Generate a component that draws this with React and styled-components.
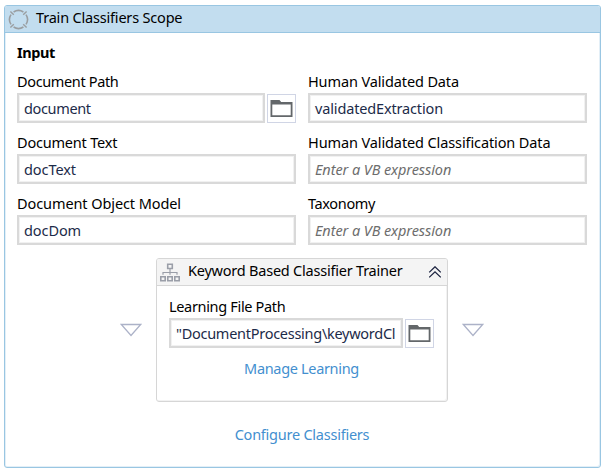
import React from "react";
import styled, { createGlobalStyle } from "styled-components";

const GlobalStyle = createGlobalStyle`
  * { box-sizing: border-box; }
  body {
    margin: 0;
    background: #fff;
    font-family: "Noto Sans", "Open Sans", sans-serif;
    font-size: 14.5px;
    line-height: 20px;
    color: #000;
  }
`;

const Page = styled.main`
  width: 606px;
  height: 474px;
  padding: 5px 5px 6px 4px;
  overflow: hidden;
`;

const Scope = styled.section`
  width: 597px;
  height: 463px;
  border: 1px solid #99c6e2;
  border-radius: 3px;
  box-shadow: inset -1px -1px 0 #e3eff7, inset 1px 0 0 #e3eff7;
  overflow: hidden;
`;

const ScopeHeader = styled.header`
  display: flex;
  align-items: center;
  height: 27px;
  padding: 0 0 0 3px;
  gap: 7px;
  background: #c2ddef;
  border-bottom: 1px solid #99c6e2;
`;

const ScopeBody = styled.div`
  display: flex;
  flex-direction: column;
  padding: 9px 13px 0 12px;
`;

const Text = styled.span`
  display: block;
  white-space: pre;
  letter-spacing: ${(p) => p.$track || 0}px;
`;

const HeaderText = styled(Text)`
  padding-bottom: 4px;
`;

const SectionTitle = styled.h2`
  margin: 0;
  height: 30px;
  font-size: 14.5px;
  font-weight: 700;
  line-height: 20px;
  letter-spacing: -0.4px;
`;

const Columns = styled.div`
  display: grid;
  grid-template-columns: 279px 279px;
  column-gap: 12px;
  row-gap: 10px;
`;

const FieldBlock = styled.div`
  display: flex;
  flex-direction: column;
  height: 51px;
`;

const FieldLabel = styled.label`
  height: 21px;
  line-height: 19px;
`;

const FieldRow = styled.div`
  display: flex;
  align-items: flex-end;
  gap: 2px;
`;

const Input = styled.div`
  flex: 1;
  min-width: 0;
  height: 30px;
  padding: 3px 5px 0;
  border: 2px solid #d9d9d9;
  box-shadow: inset 0 0 0 1px #f1f1f1;
  background: #fff;
  overflow: hidden;
  color: ${(p) => (p.$placeholder ? "#6d6d6d" : "#1c2b49")};
  font-style: ${(p) => (p.$placeholder ? "italic" : "normal")};
`;

const BrowseButton = styled.button`
  display: flex;
  align-items: center;
  justify-content: center;
  width: 29px;
  height: 29px;
  padding: 0;
  border: 1px solid #d0d5e5;
  background: #fff;
`;

const Workflow = styled.div`
  display: flex;
  align-items: center;
  justify-content: center;
  gap: 14px;
  height: 144px;
  margin-top: 13px;
`;

const Card = styled.section`
  width: 292px;
  height: 144px;
  border: 1px solid #d6d6d6;
  border-radius: 3px;
  box-shadow: inset -1px -1px 0 #f2f2f2;
  overflow: hidden;
`;

const CardHeader = styled.header`
  display: flex;
  align-items: center;
  height: 27px;
  padding: 0 5px 0 3px;
  gap: 8px;
  background: #f4f4f4;
  border-bottom: 1px solid #d6d6d6;
`;

const CardTitle = styled.div`
  flex: 1;
`;

const CardBody = styled.div`
  padding: 11px 13px 0 12px;
`;

const Link = styled.a`
  display: flex;
  justify-content: center;
  margin-top: ${(p) => p.$gap}px;
  color: #438fcf;
`;

const Icon = styled.svg`
  display: block;
  flex: none;
`;

const FolderIcon = () => (
  <Icon width="23" height="19" viewBox="0 0 23 19">
    <path d="M0.5 1H9.5L11.2 3H22.5V18H0.5Z" fill="#63676a" />
    <path d="M2.3 5.6H20.7V16.2H2.3Z" fill="#fff" />
  </Icon>
);

const ScopeIcon = () => (
  <Icon width="21" height="21" viewBox="0 0 21 21" fill="none" stroke="#9a9ea1" strokeWidth="1.6">
    <path d="M5.6 3A9 9 0 0 1 15.4 3M18 5.6A9 9 0 0 1 18 15.4M15.4 18A9 9 0 0 1 5.6 18M3 15.4A9 9 0 0 1 3 5.6" />
    <path d="M2.4 2.4L5.8 5.8M18.6 2.4L15.2 5.8M2.4 18.6L5.8 15.2M18.6 18.6L15.2 15.2" strokeWidth="1.4" />
  </Icon>
);

const TreeIcon = () => (
  <Icon width="20" height="19" viewBox="0 0 20 19" fill="none" stroke="#9a9ea8" strokeWidth="1.6">
    <path d="M7.7 1.2h4.6v4.3H7.7zM0.8 13.7h4.4v4H0.8zM7.8 13.7h4.4v4H7.8zM14.8 13.7h4.4v4h-4.4z" />
    <path d="M10 6V11.8M3 11.8V9.5H17V11.8" strokeWidth="1.2" />
  </Icon>
);

const CollapseIcon = () => (
  <Icon width="14" height="12" viewBox="0 0 14 12" fill="none" stroke="#1c2340" strokeWidth="1.3">
    <path d="M1.2 6.4L7 0.8L12.8 6.4M1.2 11.4L7 5.8L12.8 11.4" />
  </Icon>
);

const DropArrow = () => (
  <Icon width="22" height="14" viewBox="0 0 22 14" fill="#fff" stroke="#acb2c8" strokeWidth="1.3">
    <path d="M1.3 1.5H20.7L11 12.5Z" />
  </Icon>
);

const Field = ({ label, labelTrack, value, track, placeholder, browse }) => (
  <FieldBlock>
    <FieldLabel>
      <Text $track={labelTrack}>{label}</Text>
    </FieldLabel>
    <FieldRow>
      <Input $placeholder={placeholder}>
        <Text $track={track}>{value}</Text>
      </Input>
      {browse && (
        <BrowseButton aria-label="Browse">
          <FolderIcon />
        </BrowseButton>
      )}
    </FieldRow>
  </FieldBlock>
);

const fields = [
  { label: "Document Path", labelTrack: -0.36, value: "document", track: -0.35, browse: true },
  { label: "Human Validated Data", labelTrack: -0.12, value: "validatedExtraction", track: -0.15 },
  { label: "Document Text", labelTrack: -0.2, value: "docText", track: -0.07 },
  {
    label: "Human Validated Classification Data",
    labelTrack: -0.11,
    value: "Enter a VB expression",
    track: -0.09,
    placeholder: true,
  },
  { label: "Document Object Model", labelTrack: -0.09, value: "docDom", track: -0.08 },
  { label: "Taxonomy", labelTrack: -0.35, value: "Enter a VB expression", track: -0.09, placeholder: true },
];

export default function App() {
  return (
    <Page>
      <GlobalStyle />
      <Scope>
        <ScopeHeader>
          <ScopeIcon />
          <HeaderText $track={-0.19}>Train Classifiers Scope</HeaderText>
        </ScopeHeader>
        <ScopeBody>
          <SectionTitle>Input</SectionTitle>
          <Columns>
            {fields.map((f) => (
              <Field key={f.label} {...f} />
            ))}
          </Columns>
          <Workflow>
            <DropArrow />
            <Card>
              <CardHeader>
                <TreeIcon />
                <CardTitle>
                  <HeaderText $track={-0.22}>Keyword Based Classifier Trainer</HeaderText>
                </CardTitle>
                <CollapseIcon />
              </CardHeader>
              <CardBody>
                <Field
                  label="Learning File Path"
                  labelTrack={-0.33}
                  value={'"DocumentProcessing\\keywordCl'}
                  track={-0.27}
                  browse
                />
                <Link $gap={10}>
                  <Text $track={-0.33}>Manage Learning</Text>
                </Link>
              </CardBody>
            </Card>
            <DropArrow />
          </Workflow>
          <Link $gap={22}>
            <Text $track={-0.24}>Configure Classifiers</Text>
          </Link>
        </ScopeBody>
      </Scope>
    </Page>
  );
}
